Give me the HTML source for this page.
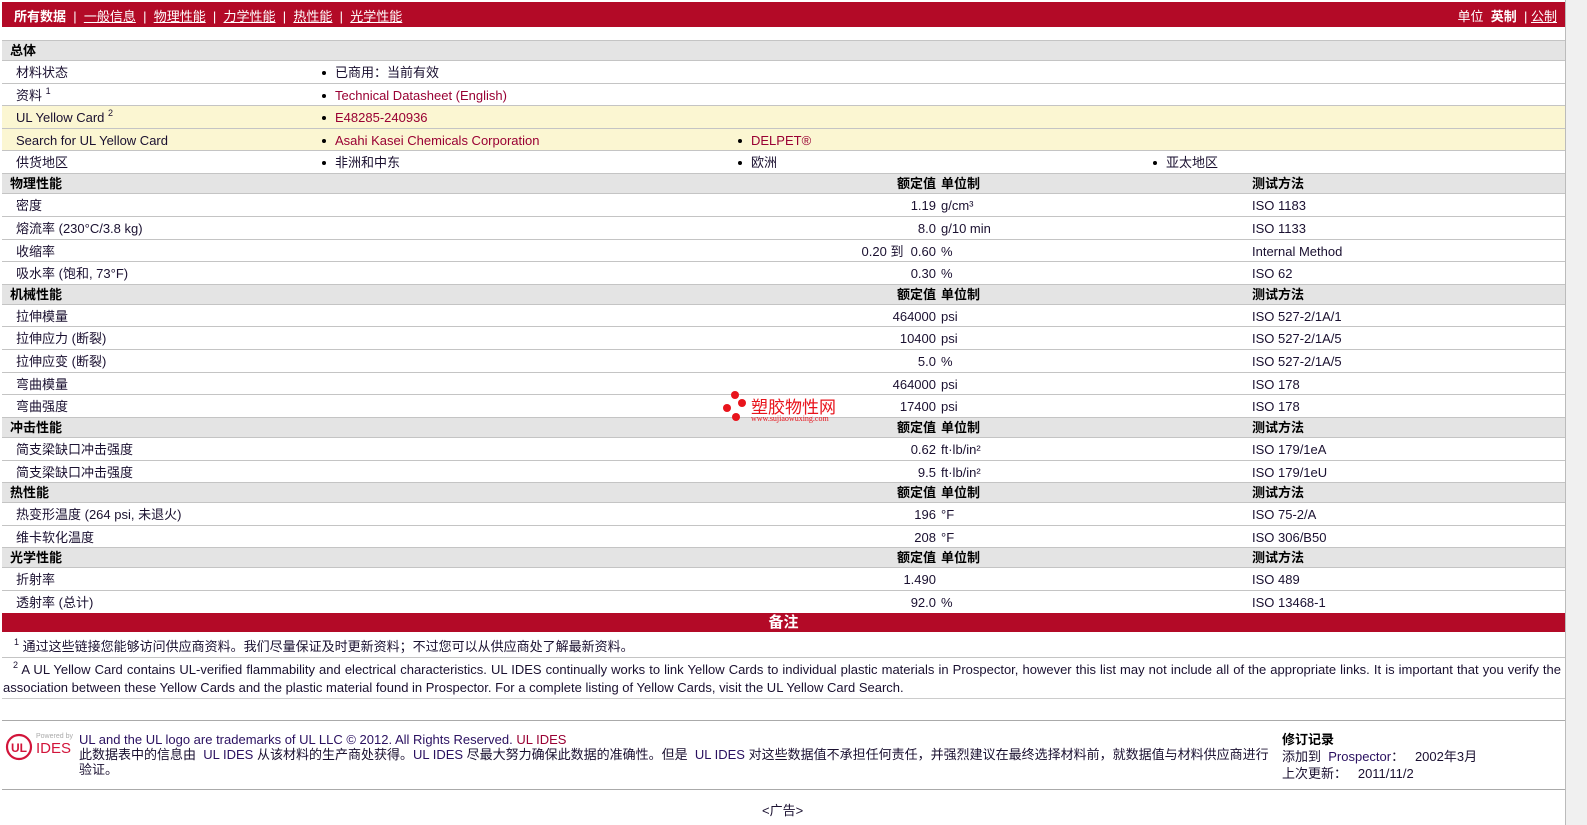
<!DOCTYPE html>
<html><head><meta charset="utf-8"><style>
body{margin:0;width:1587px;height:825px;background:#fff;font-family:"Liberation Sans","Noto Sans CJK SC",sans-serif;font-size:13px;color:#1a1030;position:relative;overflow:hidden}
.top{position:absolute;left:2px;top:2px;width:1563px;height:25px;background:#b30a27;color:#fff;font-size:13px}
.top a{color:#fff;text-decoration:underline}
.r{position:absolute;left:2px;width:1563px;border-bottom:1px solid #c4c4c4;line-height:23px}
.h{background:#e4e4e4;font-weight:bold;line-height:19px;color:#000}
.y{background:#fbf6d2}
.l{position:absolute;left:14px}
.h .l{left:8px}
.v{position:absolute;right:629px;text-align:right}
.u{position:absolute;left:939px}
.t{position:absolute;left:1250px}
.b{position:absolute}
.b:before{content:"";position:absolute;left:-13px;top:10px;width:4px;height:4px;border-radius:50%;background:#000}
.lk{color:#990033}
sup{font-size:9px;vertical-align:6px;line-height:0}
.sb{position:absolute;left:1565px;top:0;width:22px;height:825px;background:#f0f0f0;border-left:1px solid #bbb}
</style></head><body>
<div class="top"><span style="position:absolute;left:12px;top:4px"><b>所有数据</b> &nbsp;|&nbsp; <a>一般信息</a> &nbsp;|&nbsp; <a>物理性能</a> &nbsp;|&nbsp; <a>力学性能</a> &nbsp;|&nbsp; <a>热性能</a> &nbsp;|&nbsp; <a>光学性能</a></span>
<span style="position:absolute;right:8px;top:4px">单位 &nbsp;<b>英制</b> &nbsp;| <a>公制</a></span></div>
<div style="position:absolute;left:2px;top:40px;width:1563px;border-top:1px solid #c4c4c4"></div>

<div class="r h" style="top:41px;height:19px"><span class="l">总体</span></div>
<div class="r" style="top:61px;height:22px"><span class="l">材料状态</span><span class="b" style="left:333px">已商用：当前有效</span></div>
<div class="r" style="top:84px;height:21px"><span class="l">资料 <sup>1</sup></span><span class="b lk" style="left:333px">Technical Datasheet (English)</span></div>
<div class="r y" style="top:106px;height:22px"><span class="l">UL Yellow Card <sup>2</sup></span><span class="b lk" style="left:333px">E48285-240936</span></div>
<div class="r y" style="top:129px;height:21px"><span class="l">Search for UL Yellow Card</span><span class="b lk" style="left:333px">Asahi Kasei Chemicals Corporation</span><span class="b lk" style="left:749px">DELPET®</span></div>
<div class="r" style="top:151px;height:22px"><span class="l">供货地区</span><span class="b" style="left:333px">非洲和中东</span><span class="b" style="left:749px">欧洲</span><span class="b" style="left:1164px">亚太地区</span></div>

<div class="r h" style="top:174px;height:19px"><span class="l">物理性能</span><span class="v">额定值</span><span class="u">单位制</span><span class="t">测试方法</span></div>
<div class="r" style="top:194px;height:22px"><span class="l">密度</span><span class="v">1.19</span><span class="u">g/cm³</span><span class="t">ISO 1183</span></div>
<div class="r" style="top:217px;height:22px"><span class="l">熔流率 (230°C/3.8 kg)</span><span class="v">8.0</span><span class="u">g/10 min</span><span class="t">ISO 1133</span></div>
<div class="r" style="top:240px;height:21px"><span class="l">收缩率</span><span class="v">0.20 到 &nbsp;0.60</span><span class="u">%</span><span class="t">Internal Method</span></div>
<div class="r" style="top:262px;height:22px"><span class="l">吸水率 (饱和, 73°F)</span><span class="v">0.30</span><span class="u">%</span><span class="t">ISO 62</span></div>

<div class="r h" style="top:285px;height:19px"><span class="l">机械性能</span><span class="v">额定值</span><span class="u">单位制</span><span class="t">测试方法</span></div>
<div class="r" style="top:305px;height:21px"><span class="l">拉伸模量</span><span class="v">464000</span><span class="u">psi</span><span class="t">ISO 527-2/1A/1</span></div>
<div class="r" style="top:327px;height:22px"><span class="l">拉伸应力 (断裂)</span><span class="v">10400</span><span class="u">psi</span><span class="t">ISO 527-2/1A/5</span></div>
<div class="r" style="top:350px;height:22px"><span class="l">拉伸应变 (断裂)</span><span class="v">5.0</span><span class="u">%</span><span class="t">ISO 527-2/1A/5</span></div>
<div class="r" style="top:373px;height:21px"><span class="l">弯曲模量</span><span class="v">464000</span><span class="u">psi</span><span class="t">ISO 178</span></div>
<div class="r" style="top:395px;height:22px"><span class="l">弯曲强度</span><span class="v">17400</span><span class="u">psi</span><span class="t">ISO 178</span></div>

<div class="r h" style="top:418px;height:19px"><span class="l">冲击性能</span><span class="v">额定值</span><span class="u">单位制</span><span class="t">测试方法</span></div>
<div class="r" style="top:438px;height:22px"><span class="l">简支梁缺口冲击强度</span><span class="v">0.62</span><span class="u">ft·lb/in²</span><span class="t">ISO 179/1eA</span></div>
<div class="r" style="top:461px;height:21px"><span class="l">简支梁缺口冲击强度</span><span class="v">9.5</span><span class="u">ft·lb/in²</span><span class="t">ISO 179/1eU</span></div>

<div class="r h" style="top:483px;height:19px"><span class="l">热性能</span><span class="v">额定值</span><span class="u">单位制</span><span class="t">测试方法</span></div>
<div class="r" style="top:503px;height:22px"><span class="l">热变形温度 (264 psi, 未退火)</span><span class="v">196</span><span class="u">°F</span><span class="t">ISO 75-2/A</span></div>
<div class="r" style="top:526px;height:21px"><span class="l">维卡软化温度</span><span class="v">208</span><span class="u">°F</span><span class="t">ISO 306/B50</span></div>

<div class="r h" style="top:548px;height:19px"><span class="l">光学性能</span><span class="v">额定值</span><span class="u">单位制</span><span class="t">测试方法</span></div>
<div class="r" style="top:568px;height:22px"><span class="l">折射率</span><span class="v">1.490</span><span class="t">ISO 489</span></div>
<div class="r" style="top:591px;height:21px;border:0"><span class="l">透射率 (总计)</span><span class="v">92.0</span><span class="u">%</span><span class="t">ISO 13468-1</span></div>

<div style="position:absolute;left:2px;top:613px;width:1563px;height:19px;background:#b30a27;color:#fff;font-size:15px;text-align:center;line-height:19px;font-weight:bold">备注</div>
<div class="r" style="top:633px;height:24px;line-height:27px"><span class="l" style="left:12px"><sup>1</sup> 通过这些链接您能够访问供应商资料。我们尽量保证及时更新资料；不过您可以从供应商处了解最新资料。</span></div>
<div style="position:absolute;left:3px;top:661px;width:1558px;line-height:18px;text-align:justify;text-indent:10px"><sup>2</sup> A UL Yellow Card contains UL-verified flammability and electrical characteristics. UL IDES continually works to link Yellow Cards to individual plastic materials in Prospector, however this list may not include all of the appropriate links. It is important that you verify the association between these Yellow Cards and the plastic material found in Prospector. For a complete listing of Yellow Cards, visit the UL Yellow Card Search.</div>
<div style="position:absolute;left:2px;top:698px;width:1563px;border-top:1px solid #ccc"></div>
<div style="position:absolute;left:2px;top:720px;width:1563px;border-top:1px solid #aaa"></div>
<div style="position:absolute;left:2px;top:789px;width:1563px;border-top:1px solid #aaa"></div>

<svg style="position:absolute;left:5px;top:733px" width="30" height="30" viewBox="0 0 30 30"><circle cx="14" cy="14" r="12" fill="none" stroke="#d2143a" stroke-width="2.2"/><text x="14" y="19" font-size="12" font-weight="bold" fill="#d2143a" text-anchor="middle" font-family="Liberation Sans">UL</text></svg>
<div style="position:absolute;left:36px;top:733px;font-size:7px;color:#aaa">Powered by</div>
<div style="position:absolute;left:36px;top:740px;font-size:15px;color:#d2143a">IDES</div>
<div style="position:absolute;left:79px;top:732px;width:1200px;line-height:15px"><span style="color:#2a1060">UL and the UL logo are trademarks of UL LLC © 2012. All Rights Reserved. </span><span class="lk">UL IDES</span><br>此数据表中的信息由 &nbsp;<span style="color:#2a1060">UL IDES</span> 从该材料的生产商处获得。<span style="color:#2a1060">UL IDES</span> 尽最大努力确保此数据的准确性。但是 &nbsp;<span style="color:#2a1060">UL IDES</span> 对这些数据值不承担任何责任，并强烈建议在最终选择材料前，就数据值与材料供应商进行验证。</div>
<div style="position:absolute;left:1282px;top:731px;line-height:17px"><b style="color:#000">修订记录</b><br>添加到 &nbsp;<span style="color:#2a1060">Prospector</span>： &nbsp;&nbsp;2002年3月<br>上次更新： &nbsp;&nbsp;2011/11/2</div>
<div style="position:absolute;left:762px;top:800px">&lt;广告&gt;</div>

<div style="position:absolute;left:722px;top:390px">
<svg width="26" height="34"><circle cx="13" cy="5" r="4" fill="#e8141c"/><circle cx="20" cy="13" r="4" fill="#e8141c"/><circle cx="5" cy="18" r="4" fill="#e8141c"/><circle cx="14" cy="27" r="4" fill="#e8141c"/></svg>
<span style="position:absolute;left:29px;top:3px;font-size:17px;color:#e8141c;white-space:nowrap">塑胶物性网</span>
<span style="position:absolute;left:29px;top:24px;font-size:8px;color:#e8141c;font-family:'Liberation Serif',serif;white-space:nowrap">www.sujiaowuxing.com</span></div>
<div class="sb"></div>
</body></html>
